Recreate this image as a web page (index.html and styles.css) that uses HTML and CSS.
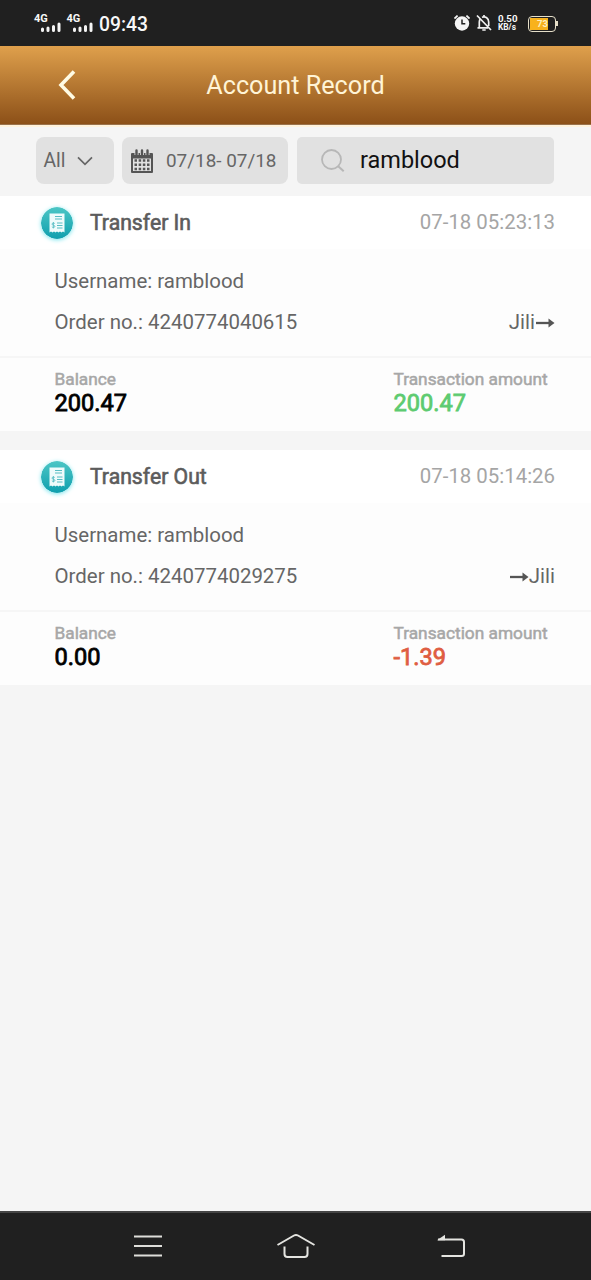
FILE: index.html
```html
<!DOCTYPE html>
<html lang="en">
<head>
<meta charset="utf-8">
<title>Account Record</title>
<link rel="stylesheet" href="styles.css">
</head>
<body>
<svg width="0" height="0" class="defs" aria-hidden="true">
  <defs>
    <linearGradient id="teal" x1="0" y1="0" x2="0" y2="1"><stop offset="0" stop-color="#4cc6c5"/><stop offset="1" stop-color="#0f9fae"/></linearGradient>
    <symbol id="receipt" viewBox="0 0 32 32">
      <circle cx="16" cy="16" r="16" fill="url(#teal)"/>
      <path d="M8.500 6.500h15v19l-1.500-1-1.500 1-1.500-1-1.500 1-1.500-1-1.500 1-1.500-1-1.500 1-1.500-1-1.500 1z" fill="#effbfb"/>
      <path d="M14 9.500h7M14 12h7M16 16h5.500M16 18.500h5.500M16 21h5.500" stroke="#59bdc4" stroke-width="1.100" fill="none"/>
      <path d="M13.700 16.500c-.6-.7-2.700-.6-2.700.6 0 1.500 2.900.8 2.900 2.300 0 1.300-2.300 1.300-3 .4M12.400 15v6.400" stroke="#59bdc4" stroke-width=".9" fill="none"/>
    </symbol>
    <symbol id="bars" viewBox="0 0 20 10"><path d="M1.500 8.500V7M7 8.500V6M12.500 8.500V4.500M18 8.500V2" stroke="#f4f4f4" stroke-width="3" stroke-linecap="round" fill="none"/></symbol>
    <symbol id="arrow" viewBox="0 0 20 12"><path d="M1 6h14" stroke="#555" stroke-width="2.300"/><path d="M13.500 1.500L19.500 6l-6 4.500z" fill="#555"/></symbol>
  </defs>
</svg>
<header class="status">
  <div class="signals">
    <div class="signal"><span>4G</span><svg><use href="#bars"/></svg></div>
    <div class="signal"><span>4G</span><svg><use href="#bars"/></svg></div>
    <time>09:43</time>
  </div>
  <div class="tray">
    <svg class="alarm" width="16" height="16" viewBox="0 0 16 16"><circle cx="8" cy="8.500" r="7.200" fill="#f5f5f5"/><path d="M.4 3.500L3.600.6M15.600 3.500L12.400.6" stroke="#f5f5f5" stroke-width="1.800"/><path d="M8 4.500v4.300h3.300" stroke="#222" stroke-width="1.500" fill="none"/></svg>
    <svg class="bell" width="16" height="18" viewBox="0 0 16 18"><path d="M3.300 13.500V8c0-1.500.5-2.700 1.300-3.600M6 3.300C9.500 2 12.700 4.200 12.700 8v4M1.500 13.800H12M6.300 16h3.400M8 1v2M1 1.500l14 14.500" stroke="#f1f1f1" stroke-width="1.700" fill="none"/></svg>
    <div class="speed"><span>0.50</span><span>KB/s</span></div>
    <div class="battery"><span>73</span></div>
  </div>
</header>
<div class="titlebar">
  <svg class="back" width="20" height="32" viewBox="0 0 20 32"><path d="M17 2.500L4 16l13 13.500" stroke="#fffbe4" stroke-width="3.600" fill="none"/></svg>
  <h1>Account Record</h1>
</div>
<div class="filters">
  <div class="field type"><span>All</span><svg width="16" height="10" viewBox="0 0 16 10"><path d="M1 1.300l7 7 7-7" stroke="#666" stroke-width="1.700" fill="none"/></svg></div>
  <div class="field date">
    <svg width="22" height="24" viewBox="0 0 22 24"><path d="M1 4h20q1 0 1 1v18q0 1-1 1H1q-1 0-1-1V5q0-1 1-1z" fill="#555"/><path d="M2 9.500h18v12.500H2z" fill="#e1e1e1"/><path d="M3.500 11.500h15M3.500 15.700h15M3.500 19.900h15" stroke="#555" stroke-width="2.500" stroke-dasharray="2.500 1.667"/><path d="M5.500 6V2M11 6V2M16.500 6V2" stroke="#e1e1e1" stroke-width="4"/><path d="M5.500 5.500V1.500M11 5.500V1.500M16.500 5.500V1.500" stroke="#555" stroke-width="2.400" stroke-linecap="round"/></svg>
    <span>07/18- 07/18</span>
  </div>
  <div class="field search">
    <svg width="24" height="24" viewBox="0 0 24 24"><circle cx="10.500" cy="10.500" r="9.500" stroke="#b7b7b7" stroke-width="1.800" fill="none"/><path d="M17.200 17.200l5.500 5" stroke="#b7b7b7" stroke-width="2"/></svg>
    <span>ramblood</span>
  </div>
</div>
<main>
  <article class="record">
    <div class="head"><svg class="badge"><use href="#receipt"/></svg><h2>Transfer In</h2><time>07-18 05:23:13</time></div>
    <div class="details">
      <p>Username: ramblood</p>
      <div class="order"><p>Order no.: 4240774040615</p><p class="route">Jili<svg><use href="#arrow"/></svg></p></div>
    </div>
    <div class="totals">
      <div class="total"><span>Balance</span><strong>200.47</strong></div>
      <div class="total amount"><span>Transaction amount</span><strong class="gain">200.47</strong></div>
    </div>
  </article>
  <article class="record">
    <div class="head"><svg class="badge"><use href="#receipt"/></svg><h2>Transfer Out</h2><time>07-18 05:14:26</time></div>
    <div class="details">
      <p>Username: ramblood</p>
      <div class="order"><p>Order no.: 4240774029275</p><p class="route"><svg><use href="#arrow"/></svg>Jili</p></div>
    </div>
    <div class="totals">
      <div class="total"><span>Balance</span><strong>0.00</strong></div>
      <div class="total amount"><span>Transaction amount</span><strong class="loss">-1.39</strong></div>
    </div>
  </article>
</main>
<nav class="navbar">
  <svg width="28" height="22" viewBox="0 0 28 22"><path d="M0 1.500h28M0 11h28M0 20.500h28" stroke="#dededa" stroke-width="2"/></svg>
  <svg width="40" height="26" viewBox="0 0 40 26"><path d="M1.500 12L18 2.500q2-1.200 4 0L38.500 12M8.500 13.500V21q0 3 3 3h17q3 0 3-3v-7.500" stroke="#e4e4e0" stroke-width="2" fill="none"/></svg>
  <svg width="28" height="24" viewBox="0 0 28 24"><path d="M1 5.500h23.500q2.500 0 2.500 2.500v12q0 2-2.500 2H4.500" stroke="#e4e4e0" stroke-width="2" fill="none"/><path d="M0 6.300L8 .8v5.500z" fill="#e4e4e0"/></svg>
</nav>
</body>
</html>
```
FILE: styles.css
```css
* { box-sizing: border-box; }
body { margin: 0; height: 1280px; display: flex; flex-direction: column; background: #f5f5f5; font-family: Roboto, sans-serif; color: #666; overflow: hidden; }
h1, h2, p { margin: 0; font-weight: 400; }
svg { display: block; flex: none; }
.defs { position: absolute; }

.status { height: 46px; flex: none; background: #202020; color: #f8f8f8; display: flex; justify-content: space-between; padding: 0 35px 0 34px; }
.signals, .tray { display: flex; align-items: center; }
.signal { width: 32.500px; height: 20px; display: flex; align-items: flex-end; position: relative; }
.signal span { position: absolute; left: 0; top: 0; font-size: 11px; line-height: 12px; font-weight: 700; }
.signal svg { width: 20px; height: 10px; margin: 0 0 1px 6.500px; }
.signals time { font-size: 19.300px; line-height: 24px; margin-top: 3px; font-weight: 500; }
.alarm { margin-right: 6px; }
.bell { margin-right: 6px; }
.speed { width: 21px; display: flex; flex-direction: column; font-size: 9.700px; line-height: 9px; font-weight: 700; margin-right: 9px; }
.speed span + span { font-size: 8.300px; }
.battery { width: 28px; height: 16px; border: 1.500px solid #e6dfc9; border-radius: 4px; padding: 1px; margin-top: 1px; position: relative; }
.battery::after { content: ""; position: absolute; right: -3px; top: 4px; width: 2px; height: 5px; background: #e6dfc9; }
.battery span { display: block; width: 18px; height: 12px; background: #f8b21c; color: #fff0bd; font-size: 9.500px; line-height: 12px; font-weight: 700; text-align: right; }

.titlebar { height: 79px; flex: none; display: grid; grid-template-columns: 118px 1fr 118px; align-items: center; background: linear-gradient(#dfa04c, #8c5018); border-bottom: 1px solid #9a724b; }
.back { margin-left: 57px; }
h1 { text-align: center; color: #fff4d6; font-size: 25.200px; line-height: 32px; margin-top: 2px; }

.filters { height: 71px; flex: none; display: flex; padding: 10px 36px 12px; border-top: 2px solid #fff2dc; }
.field { height: 47px; border-radius: 8px; background: #e1e1e1; display: flex; align-items: center; font-size: 18.900px; }
.field span { margin-top: -1px; }
.type { width: 78px; padding-left: 7.500px; gap: 12px; margin-right: 8px; }
.type span { font-size: 19.300px; }
.date { width: 166px; padding-left: 9px; gap: 13px; margin-right: 9px; }
.search { width: 257px; border-radius: 5px; padding-left: 24px; gap: 15px; font-size: 23.500px; color: #111; }

main { flex: 1; }
.record { height: 235px; background: #fdfdfd; margin-bottom: 19px; }
.head { height: 53px; background: #fff; display: flex; align-items: center; padding: 0 36px 0 41px; }
.badge { width: 32px; height: 32px; border-radius: 50%; box-shadow: 0 1px 4px #7ee6ee; margin-right: 17px; }
h2 { font-size: 21.200px; flex: 1; color: #5c5c5c; -webkit-text-stroke: .6px #5c5c5c; margin-top: -1px; }
.head time { font-size: 20.400px; color: #a5a5a5; margin-top: -2px; }
.details { height: 109px; padding: 12px 36px 0 54.500px; border-bottom: 2px solid #f6f6f6; font-size: 20.450px; line-height: 41px; }
.order, .route { display: flex; justify-content: space-between; align-items: center; }
.route svg { width: 20px; height: 12px; }
.totals { display: flex; padding: 10px 36px 0 54.500px; }
.total { width: 339px; display: flex; flex-direction: column; }
.total span { font-size: 17.300px; line-height: 22px; color: #a7a7a7; -webkit-text-stroke: .5px #a7a7a7; }
.total strong { font-size: 23.600px; line-height: 26px; font-weight: 400; color: #000; -webkit-text-stroke: .8px currentColor; }
.amount { width: auto; white-space: nowrap; }
.total .gain { color: #5dcb70; }
.total .loss { color: #df5d42; }

.navbar { height: 69px; flex: none; background: #202020; border-top: 2px solid #454545; display: grid; grid-template-columns: 142px 161px 28px; align-items: center; padding: 0 0 2px 134px; }
```
